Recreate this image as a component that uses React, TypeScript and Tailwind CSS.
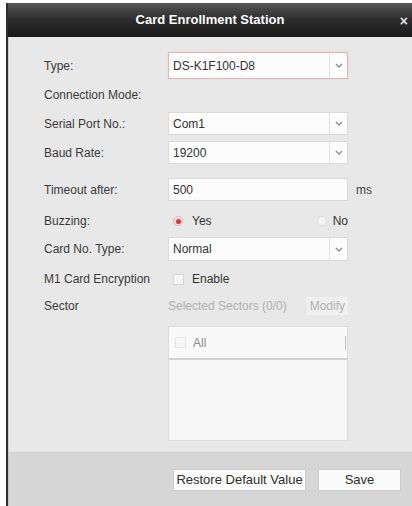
import React from 'react';

const font = { fontFamily: '"Liberation Sans", Arial, sans-serif' };

const Chevron: React.FC = () => (
  <svg width="8" height="5" viewBox="0 0 8 5" fill="none">
    <path d="M1 1l3 3 3-3" stroke="#8a8a8a" strokeWidth="1.3" />
  </svg>
);

interface SelectProps {
  value: string;
  focused?: boolean;
  height: string;
}

const Select: React.FC<SelectProps> = ({ value, focused, height }) => (
  <div
    className={`flex w-[180px] ${height} items-stretch bg-[#fcfcfc] border ${
      focused ? 'border-[#e6b3b3] shadow-[0_0_2px_#f3d0d0]' : 'border-[#dadada]'
    }`}
  >
    <div className="flex-1 flex items-center pl-[4px] text-[#333]">{value}</div>
    <div className="w-[18px] border-l border-[#e2e2e2] flex items-center justify-center">
      <Chevron />
    </div>
  </div>
);

const Label: React.FC<{ children: React.ReactNode }> = ({ children }) => (
  <div className="w-[124px] shrink-0 text-[#3a3a3a]">{children}</div>
);

export default function App() {
  return (
    <div className="w-[412px] h-[506px] bg-white overflow-hidden" style={font}>
      <div className="ml-[6px] mt-[3px] h-[503px] flex flex-col border-l-2 border-[#2e2e2e] text-[12px] whitespace-nowrap">
        {/* title bar */}
        <div className="h-[34px] shrink-0 flex items-center bg-gradient-to-b from-[#555555] via-[#2c2c2c] to-[#1a1a1a] text-white relative">
          <div className="flex-1 text-center text-[13px] font-bold">Card Enrollment Station</div>
          <div className="absolute right-[4px] top-[8px] text-[14px] font-bold text-[#e0e0e0]">×</div>
        </div>

        {/* form */}
        <div className="flex flex-col bg-[#e8e8e8] border-l border-[#cfcfcf] pl-[35px] pb-[10px]">
          <div className="mt-[15px] h-[27px] flex items-center">
            <Label>Type:</Label>
            <Select value="DS-K1F100-D8" focused height="h-[27px]" />
          </div>
          <div className="mt-[4px] h-[24px] flex items-center">
            <Label>Connection Mode:</Label>
          </div>
          <div className="mt-[5px] h-[23px] flex items-center">
            <Label>Serial Port No.:</Label>
            <Select value="Com1" height="h-[23px]" />
          </div>
          <div className="mt-[6px] h-[23px] flex items-center">
            <Label>Baud Rate:</Label>
            <Select value="19200" height="h-[23px]" />
          </div>
          <div className="mt-[14px] h-[23px] flex items-center">
            <Label>Timeout after:</Label>
            <div className="w-[180px] h-[23px] bg-[#fcfcfc] border border-[#dadada] flex items-center pl-[4px] text-[#333]">500</div>
            <div className="ml-[8px] text-[#444]">ms</div>
          </div>
          <div className="mt-[9px] h-[22px] flex items-center">
            <Label>Buzzing:</Label>
            <div className="w-[180px] flex items-center">
              <span className="ml-[5px] w-[10px] h-[10px] rounded-full bg-[#f3dede] border border-[#e8b7b7] flex items-center justify-center">
                <span className="w-[5px] h-[5px] rounded-full bg-[#d9343a]" />
              </span>
              <span className="ml-[9px] text-[#333]">Yes</span>
              <span className="ml-auto w-[10px] h-[10px] rounded-full bg-[#f4f4f4] border border-[#dcdcdc]" />
              <span className="ml-[6px] text-[#333]">No</span>
            </div>
          </div>
          <div className="mt-[5px] h-[24px] flex items-center">
            <Label>Card No. Type:</Label>
            <Select value="Normal" height="h-[24px]" />
          </div>
          <div className="mt-[7px] h-[22px] flex items-center">
            <Label>M1 Card Encryption</Label>
            <span className="ml-[5px] w-[11px] h-[11px] bg-[#f6f6f6] border border-[#d6d6d6]" />
            <span className="ml-[8px] text-[#333]">Enable</span>
          </div>
          <div className="mt-[7px] h-[18px] flex items-center">
            <Label>Sector</Label>
            <div className="w-[180px] flex items-center">
              <span className="text-[#b0b0b0]">Selected Sectors (0/0)</span>
              <span className="ml-auto h-[18px] px-[3px] flex items-center bg-[#f0f0f0] text-[#b0b0b0]">Modify</span>
            </div>
          </div>
          <div className="mt-[11px] flex">
            <div className="w-[124px] shrink-0" />
            <div className="w-[180px] h-[115px] flex flex-col bg-[#f6f6f6] border border-[#dcdcdc]">
              <div className="h-[33px] flex items-center bg-[#f9f9f9] border-b-2 border-[#d2d2d2]">
                <span className="ml-[6px] w-[11px] h-[11px] bg-[#f6f6f6] border border-[#e4e4e4]" />
                <span className="ml-[7px] text-[#8a8a8a]">All</span>
                <span className="ml-auto mr-[1px] w-px h-[14px] bg-[#bdbdbd]" />
              </div>
            </div>
          </div>
        </div>

        {/* footer */}
        <div className="flex-1 bg-[#d6d6d6] border-t border-[#e4e4e4] border-l border-l-[#c4c4c4] flex items-start pt-[17px] pl-[164px]">
          <button className="w-[133px] h-[22px] bg-[#fafafa] border border-[#cdcdcd] text-[#2e2e2e] text-[13px]">
            Restore Default Value
          </button>
          <button className="ml-[12px] w-[83px] h-[22px] bg-[#fafafa] border border-[#cdcdcd] text-[#2e2e2e] text-[13px]">
            Save
          </button>
        </div>
      </div>
    </div>
  );
}
